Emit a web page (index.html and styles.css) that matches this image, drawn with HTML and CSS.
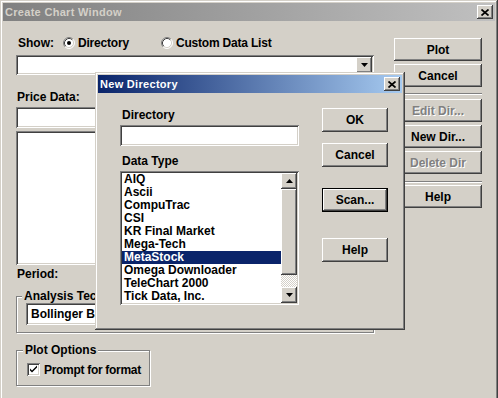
FILE: index.html
```html
<!DOCTYPE html>
<html lang="en">
<head>
  <meta charset="UTF-8" />
  <title>Create Chart Window</title>
  <link rel="stylesheet" href="styles.css">
</head>
<body>
  <div class="window">
    <div class="titlebar inactive">
      <span class="title">Create Chart Window</span>
      <span class="raised title-close">
        <svg width="8" height="7" viewBox="0 0 8 7"><path d="M0.5 0.5L7.5 6.5M7.5 0.5L0.5 6.5" stroke="#000" stroke-width="1.7"/></svg>
      </span>
    </div>

    <div class="main">
      <!-- left column: data selection -->
      <div class="left">
        <div class="show-row">
          <span class="show-label">Show:</span>
          <span class="radio">
            <svg width="12" height="12" viewBox="0 0 12 12">
              <circle cx="6" cy="6" r="5" fill="#fff"/>
              <path d="M2.11 9.89A5.5 5.5 0 0 1 9.89 2.11" fill="none" stroke="#808080"/>
              <path d="M9.89 2.11A5.5 5.5 0 0 1 2.11 9.89" fill="none" stroke="#fff"/>
              <path d="M2.82 9.18A4.5 4.5 0 0 1 9.18 2.82" fill="none" stroke="#404040"/>
              <path d="M9.18 2.82A4.5 4.5 0 0 1 2.82 9.18" fill="none" stroke="#d4d0c8"/>
              <circle cx="6" cy="6" r="2" fill="#000"/>
            </svg>
            Directory
          </span>
          <span class="radio">
            <svg width="12" height="12" viewBox="0 0 12 12">
              <circle cx="6" cy="6" r="5" fill="#fff"/>
              <path d="M2.11 9.89A5.5 5.5 0 0 1 9.89 2.11" fill="none" stroke="#808080"/>
              <path d="M9.89 2.11A5.5 5.5 0 0 1 2.11 9.89" fill="none" stroke="#fff"/>
              <path d="M2.82 9.18A4.5 4.5 0 0 1 9.18 2.82" fill="none" stroke="#404040"/>
              <path d="M9.18 2.82A4.5 4.5 0 0 1 2.82 9.18" fill="none" stroke="#d4d0c8"/>
            </svg>
            Custom Data List
          </span>
        </div>

        <div class="sunken combo dir-combo">
          <span class="combo-text"></span>
          <span class="raised drop-btn">
            <svg width="7" height="4" viewBox="0 0 7 4"><path d="M0 0h7l-3.5 4z" fill="#000"/></svg>
          </span>
        </div>

        <div class="label price-label">Price Data:</div>
        <div class="sunken price-edit"></div>
        <div class="sunken price-list"></div>
        <div class="label period-label">Period:</div>

        <fieldset class="group analysis">
          <legend>Analysis Techniques</legend>
          <div class="sunken combo tech-combo">
            <span class="combo-text">Bollinger Bands</span>
          </div>
        </fieldset>

        <fieldset class="group plot-options">
          <legend>Plot Options</legend>
          <div class="check-row">
            <span class="sunken checkbox">
              <svg width="9" height="9" viewBox="0 0 9 9"><path d="M1 3.5L3 5.5L8 0.5V2.5L3 7.5L1 5.5Z" fill="#000"/></svg>
            </span>
            Prompt for format
          </div>
        </fieldset>
      </div>

      <!-- right column: command buttons -->
      <div class="right">
        <div class="raised btn">Plot</div>
        <div class="raised btn gap-small">Cancel</div>
        <div class="etched sep-top"></div>
        <div class="raised btn disabled gap-edit">Edit Dir...</div>
        <div class="raised btn gap-small">New Dir...</div>
        <div class="raised btn disabled gap-small">Delete Dir</div>
        <div class="etched sep-bottom"></div>
        <div class="raised btn gap-help">Help</div>
      </div>
    </div>

    <!-- modal dialog on top of the window -->
    <div class="dialog">
      <div class="titlebar active">
        <span class="title">New Directory</span>
        <span class="raised title-close">
          <svg width="8" height="7" viewBox="0 0 8 7"><path d="M0.5 0.5L7.5 6.5M7.5 0.5L0.5 6.5" stroke="#000" stroke-width="1.7"/></svg>
        </span>
      </div>
      <div class="dialog-body">
        <div class="dialog-left">
          <div class="label">Directory</div>
          <div class="sunken dir-edit"></div>
          <div class="label type-label">Data Type</div>
          <div class="sunken type-list">
            <div class="items">
              <div class="item">AIQ</div>
              <div class="item">Ascii</div>
              <div class="item">CompuTrac</div>
              <div class="item">CSI</div>
              <div class="item">KR Final Market</div>
              <div class="item">Mega-Tech</div>
              <div class="item selected">MetaStock</div>
              <div class="item">Omega Downloader</div>
              <div class="item">TeleChart 2000</div>
              <div class="item">Tick Data, Inc.</div>
            </div>
            <div class="scrollbar">
              <span class="raised scroll-btn">
                <svg width="7" height="4" viewBox="0 0 7 4"><path d="M0 4h7l-3.5-4z" fill="#000"/></svg>
              </span>
              <span class="raised thumb"></span>
              <span class="track"></span>
              <span class="raised scroll-btn">
                <svg width="7" height="4" viewBox="0 0 7 4"><path d="M0 0h7l-3.5 4z" fill="#000"/></svg>
              </span>
            </div>
          </div>
        </div>
        <div class="dialog-buttons">
          <div class="raised btn small">OK</div>
          <div class="raised btn small d-cancel">Cancel</div>
          <div class="raised btn small default d-scan">Scan...</div>
          <div class="raised btn small d-help">Help</div>
        </div>
      </div>
    </div>
  </div>
</body>
</html>
```

FILE: styles.css
```css
body {
  margin: 0;
  background: #d4d0c8;
  color: #000;
  font-family: 'Liberation Sans', Arial, sans-serif;
  font-size: 12px;
  font-weight: bold;
  overflow: hidden;
}

/* win2k bevels */
.raised {
  background: #d4d0c8;
  box-shadow: inset -1px -1px #404040, inset 1px 1px #fff, inset -2px -2px #808080, inset 2px 2px #d4d0c8;
}

.sunken {
  background: #fff;
  box-shadow: inset 1px 1px #808080, inset -1px -1px #fff, inset 2px 2px #404040, inset -2px -2px #d4d0c8;
}

.window {
  position: relative;
  width: 498px;
  height: 410px;
  box-sizing: border-box;
  padding: 3px;
  background: #d4d0c8;
  box-shadow: inset -1px -1px #404040, inset 1px 1px #d4d0c8, inset -2px -2px #808080, inset 2px 2px #fff;
}

.titlebar {
  height: 18px;
  display: flex;
  align-items: center;
  justify-content: space-between;
  padding: 0 2px 0 2px;
  font-size: 11px;
  letter-spacing: 0.3px;
}

.titlebar.inactive {
  background: linear-gradient(to right, #808080, #c0c0c0);
  color: #d4d0c8;
}

.titlebar.active {
  background: linear-gradient(to right, #0a246a, #a6caf0);
  color: #fff;
}

.title-close {
  width: 16px;
  height: 14px;
  display: flex;
  align-items: center;
  justify-content: center;
}

.main {
  display: flex;
  padding: 15px 0 0 13px;
}

.left {
  width: 358px;
  display: flex;
  flex-direction: column;
}

.label {
  height: 14px;
  line-height: 14px;
  padding-left: 1px;
}

.show-row {
  display: grid;
  grid-template-columns: 45px 98px auto;
  align-items: center;
  height: 14px;
  padding-left: 2px;
}

.radio {
  display: flex;
  align-items: center;
  gap: 3px;
  letter-spacing: -0.2px;
}

.combo {
  display: flex;
  align-items: center;
  justify-content: space-between;
  box-sizing: border-box;
  padding: 2px;
}

.dir-combo {
  height: 20px;
  margin-top: 5px;
}

.drop-btn {
  width: 16px;
  height: 16px;
  display: flex;
  align-items: center;
  justify-content: center;
}

.price-label {
  margin-top: 15px;
}

.price-edit {
  width: 220px;
  height: 21px;
  margin-top: 3px;
}

.price-list {
  width: 220px;
  height: 134px;
  margin-top: 3px;
}

.period-label {
  margin-top: 2px;
}

.group {
  margin: 0;
  border: 1px solid #808080;
  box-shadow: inset 1px 1px #fff, 1px 1px #fff;
  min-width: 0;
}

.group legend {
  padding: 0 2px;
  margin-left: -4px;
  height: 14px;
  line-height: 14px;
  background: #d4d0c8;
  white-space: nowrap;
}

.analysis {
  margin-top: 8px;
  height: 44px;
  box-sizing: border-box;
  padding: 0 0 0 9px;
}

.tech-combo {
  width: 220px;
  height: 22px;
  padding-left: 5px;
}

.plot-options {
  width: 134px;
  margin-top: 10px;
  box-sizing: border-box;
  height: 43px;
  padding: 6px 0 0 10px;
}

.check-row {
  display: flex;
  align-items: center;
  gap: 4px;
  height: 13px;
  letter-spacing: -0.3px;
}

.checkbox {
  width: 13px;
  height: 13px;
  display: flex;
  align-items: center;
  justify-content: center;
}

.right {
  width: 88px;
  margin: 2px 0 0 20px;
  display: flex;
  flex-direction: column;
}

.btn {
  height: 23px;
  display: flex;
  align-items: center;
  justify-content: center;
}

.btn.disabled {
  color: #808080;
  text-shadow: 1px 1px 0 #fff;
}

.gap-small {
  margin-top: 3px;
}

.etched {
  height: 0;
  border-top: 1px solid #808080;
  border-bottom: 1px solid #fff;
}

.sep-top {
  margin-top: 6px;
}

.gap-edit {
  margin-top: 4px;
}

.sep-bottom {
  margin-top: 7px;
}

.gap-help {
  margin-top: 2px;
}

/* New Directory dialog */
.dialog {
  position: absolute;
  left: 95px;
  top: 72px;
  width: 310px;
  height: 258px;
  box-sizing: border-box;
  padding: 3px;
  background: #d4d0c8;
  box-shadow: inset -1px -1px #404040, inset 1px 1px #d4d0c8, inset -2px -2px #808080, inset 2px 2px #fff;
}

.dialog-body {
  display: flex;
  padding: 15px 0 0 22px;
}

.dialog-left {
  width: 179px;
  display: flex;
  flex-direction: column;
}

.dialog-left .label {
  padding-left: 2px;
}

.dir-edit {
  height: 21px;
  margin-top: 3px;
}

.type-label {
  margin-top: 8px;
}

.type-list {
  margin-top: 3px;
  padding: 2px;
  display: flex;
}

.items {
  flex: 1;
}

.item {
  height: 13px;
  line-height: 13px;
  padding-left: 2px;
  white-space: nowrap;
}

.item.selected {
  background: #0a246a;
  color: #fff;
}

.scrollbar {
  width: 16px;
  display: flex;
  flex-direction: column;
}

.scroll-btn {
  height: 16px;
  display: flex;
  align-items: center;
  justify-content: center;
}

.thumb {
  height: 86px;
}

.track {
  height: 12px;
  background: repeating-conic-gradient(#fff 0 25%, #d4d0c8 0 50%) 0 0 / 2px 2px;
}

.dialog-buttons {
  width: 66px;
  margin-left: 23px;
  display: flex;
  flex-direction: column;
}

.btn.small {
  height: 24px;
}

.btn.default {
  box-shadow: inset 0 0 0 1px #000, inset -2px -2px #404040, inset 2px 2px #fff, inset -3px -3px #808080, inset 3px 3px #d4d0c8;
}

.d-cancel {
  margin-top: 11px;
}

.d-scan {
  margin-top: 21px;
}

.d-help {
  margin-top: 26px;
}
```
